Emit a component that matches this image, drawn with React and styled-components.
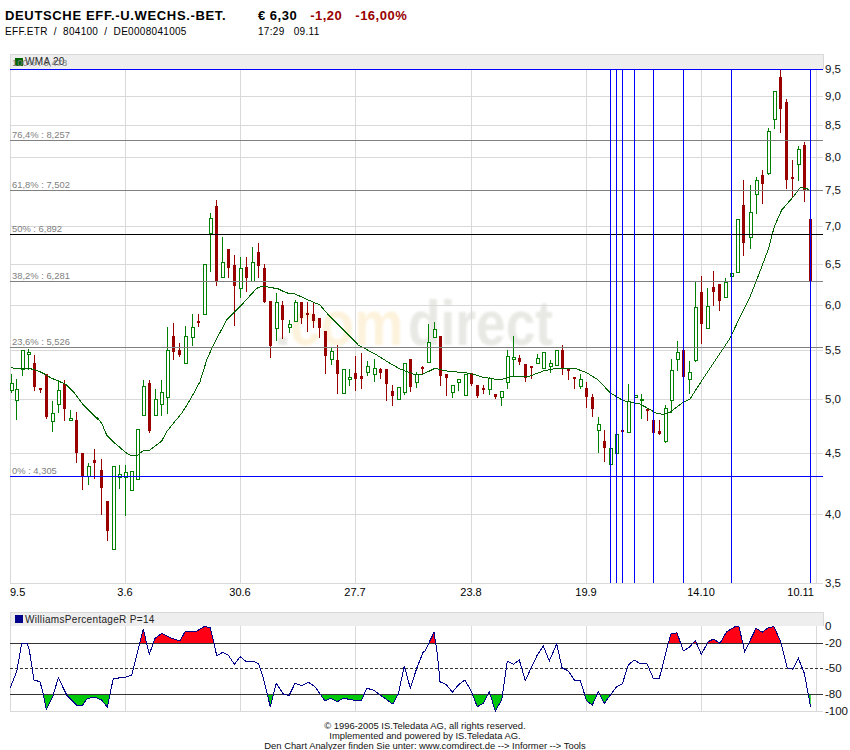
import React from "react";
import styled, { createGlobalStyle } from "styled-components";

const GlobalStyle = createGlobalStyle`
  html, body {
    margin: 0;
    background: #fff;
  }
  body {
    font-family: "Liberation Sans", Arial, sans-serif;
    color: #000;
  }
`;

const Page = styled.div`
  width: 850px;
  height: 750px;
  overflow: hidden;
`;

const Header = styled.header`
  display: grid;
  grid-template-columns: 253px 1fr;
  height: 54px;
  padding: 8px 0 0 5px;
  box-sizing: border-box;
`;

const Title = styled.div`
  font-size: 13px;
  line-height: 15px;
  font-weight: bold;
  letter-spacing: 0.65px;
  white-space: pre;
`;

const Quote = styled.div`
  display: flex;
  gap: 13px;
`;

const QuoteValue = styled.span`
  font-size: 13px;
  line-height: 15px;
  font-weight: bold;
  letter-spacing: 0.5px;
  color: ${(p) => (p.$down ? "#990000" : "#000")};
`;

const Sub = styled.div`
  font-size: 10px;
  line-height: 12px;
  margin-top: 3px;
  letter-spacing: 0.3px;
  white-space: pre;
`;

const Panel = styled.section`
  margin-left: 10px;
  margin-top: ${(p) => p.$top || 0}px;
`;

const LegendBar = styled.div`
  position: relative;
  display: flex;
  align-items: center;
  gap: 2px;
  box-sizing: border-box;
  width: 814px;
  height: ${(p) => p.$height}px;
  padding-left: 4px;
  background: #eeeeee;
  border: solid #d9d9d9;
  border-width: 1px 1px 0 1px;
`;

const Swatch = styled.span`
  width: 8px;
  height: 8px;
  margin-top: -1px;
  background: ${(p) => p.$color};
`;

const LegendText = styled.span`
  font-size: 10px;
  line-height: 12px;
  letter-spacing: 0.32px;
  color: #222;
`;

const OverlapLabel = styled.span`
  position: absolute;
  left: 1px;
  top: 1px;
  font-size: 9.4px;
  line-height: 13px;
  color: #808080;
`;

const Chart = styled.svg`
  display: block;
  overflow: visible;
  font-family: "Liberation Sans", Arial, sans-serif;
`;

const Footer = styled.footer`
  margin-top: 8px;
  text-align: center;
  font-size: 9.4px;
  line-height: 10px;
  color: #111;
`;

const RED = "#990000";
const GREEN = "#008000";

// x, r/g, high, body top, body bottom, low (page pixels)
const candles = [
  [11,"g",374,383,390,392],[16,"g",379,389,400,419],[22,"g",350,350,369,375],[28,"g",349,352,354,369],
  [34,"r",355,363,387,390],[40,"r",388,388,390,392],[46,"r",374,374,417,418],[52,"g",401,413,421,431],
  [58,"g",380,390,404,412],[64,"r",380,384,409,420],[70,"g",410,418,420,420],[76,"r",412,420,453,462],
  [82,"r",453,453,476,489],[88,"g",463,466,476,484],[94,"r",449,460,463,478],[101,"r",459,470,488,514],
  [107,"r",501,501,531,540],[113,"g",466,466,549,549],[119,"g",465,474,477,488],[125,"g",465,472,477,515],
  [131,"g",471,471,490,490],[137,"g",429,429,479,479],[143,"g",380,386,415,415],[149,"r",380,383,431,432],
  [155,"g",389,399,415,415],[161,"g",380,392,404,415],[167,"g",327,350,397,413],[173,"r",323,336,352,359],
  [179,"r",343,350,355,356],[185,"g",326,336,363,363],[192,"g",314,327,337,345],[198,"r",314,321,322,326],
  [204,"g",264,264,314,314],[210,"g",213,218,233,271],[216,"r",200,206,281,285],[222,"g",237,262,277,277],
  [228,"r",249,249,268,277],[234,"r",255,265,286,325],[240,"g",257,268,288,297],[246,"r",257,267,278,291],
  [252,"g",247,262,281,281],[258,"r",243,252,266,277],[264,"r",264,268,302,302],[270,"r",301,301,346,357],
  [276,"g",293,302,328,340],[282,"r",301,305,320,338],[289,"g",320,324,327,332],[295,"g",300,302,321,321],
  [301,"r",302,302,318,323],[307,"r",302,313,315,331],[313,"r",303,314,321,327],[319,"r",318,318,328,337],
  [325,"r",331,331,356,373],[331,"g",347,351,359,364],[337,"r",345,360,374,393],[343,"g",369,369,393,393],
  [349,"g",369,377,379,385],[355,"r",356,373,379,390],[361,"r",353,376,379,388],[367,"g",361,366,372,375],
  [374,"g",359,368,374,381],[380,"r",368,369,373,378],[386,"r",369,369,384,400],[392,"r",385,391,396,405],
  [398,"g",387,387,399,399],[404,"g",363,363,392,394],[410,"r",359,359,387,391],[416,"g",372,374,382,387],
  [422,"r",366,367,369,374],[428,"g",324,342,362,362],[434,"g",322,329,337,337],[440,"r",336,336,376,385],
  [446,"r",374,374,378,395],[452,"g",385,385,392,397],[458,"g",379,379,382,390],[465,"g",374,374,395,395],
  [471,"r",373,373,384,385],[477,"r",385,385,396,397],[483,"r",385,388,390,393],[489,"g",377,378,389,394],
  [495,"r",394,394,397,398],[501,"g",391,391,397,405],[507,"g",350,356,382,388],[513,"g",336,357,359,376],
  [519,"r",355,358,362,364],[525,"r",364,364,378,381],[531,"r",366,366,367,378],[537,"g",354,358,363,363],
  [543,"g",352,352,368,368],[550,"g",360,363,366,372],[556,"g",350,350,365,365],[562,"r",345,350,368,374],
  [568,"r",368,368,371,379],[574,"r",377,377,379,388],[580,"g",374,379,386,388],[586,"r",382,388,397,407],
  [592,"r",394,397,409,416],[598,"g",417,424,430,452],[604,"r",430,441,448,461],[610,"g",448,448,464,464],
  [616,"g",434,434,453,453],[622,"r",430,430,432,432],[628,"g",384,401,432,432],[635,"g",395,395,397,397],
  [641,"g",394,399,400,418],[647,"r",409,409,411,420],[653,"r",420,420,433,433],[659,"r",420,431,434,434],
  [665,"g",405,408,441,442],[671,"g",359,370,400,412],[677,"g",341,352,359,370],[683,"r",350,350,377,377],
  [689,"g",361,372,379,393],[695,"g",282,307,360,361],[701,"r",276,292,324,343],[707,"g",288,306,328,328],
  [713,"r",271,287,292,305],[719,"r",284,284,301,310],[725,"g",278,282,297,297],[731,"g",273,273,276,276],
  [737,"g",219,219,272,272],[743,"r",180,205,243,255],[750,"g",185,212,237,248],[756,"g",177,180,194,213],
  [762,"r",170,175,184,203],[768,"g",128,131,173,174],[774,"g",91,91,119,128],[780,"r",69,77,109,132],
  [786,"r",99,102,180,188],[792,"r",160,177,179,196],[798,"g",146,149,164,180],[804,"r",142,145,190,201],
  [810,"r",219,219,282,282],
];

const z = (ox, oy, pts) => pts.map(([x, y]) => [ox + x / 3, oy + y / 3]);

const wmaLine = [
  ...z(0, 250, [[32,352],[48,356],[85,354],[120,365],[135,373],[155,385],[180,395],[200,405],[220,425],[250,465],[295,510]]),
  ...z(0, 400, [[290,50],[305,70],[320,105],[345,130],[380,160],[395,167],[413,165],[430,152],[450,150],[485,123],[500,95],[520,70],[545,40]]),
  ...z(0, 250, [[570,450],[600,395],[620,330],[640,285],[680,210],[720,170],[770,115],[790,108],[840,118]]),
  ...z(280, 290, [[0,0],[25,10],[45,12],[80,28],[120,45],[150,80],[200,130],[235,165],[290,195],[330,220],[360,237],[400,252],[430,252],[465,235],[500,243],[570,250],[610,262],[660,270],[700,258],[750,258],[790,243],[830,235],[850,237]]),
  ...z(560, 280, [[0,265],[50,267],[80,278],[115,300],[150,338],[190,362],[240,372],[290,400],[310,403],[330,397],[365,370],[390,357],[430,295],[470,235],[510,175],[545,100],[570,50],[590,0]]),
  ...z(425, 0, [[1030,748],[1048,680],[1070,630],[1105,590],[1125,563],[1145,565],[1152,570]]),
];

const williamsLine = [
  ...z(0, 570, [[30,355],[50,305],[65,220],[82,220],[88,240],[102,330],[120,335],[128,365],[139,418],[158,380],[175,323],[200,375],[230,405],[248,405],[262,385],[285,382],[305,390],[322,412],[340,325],[372,323],[395,315],[418,225],[430,178],[448,253],[465,205],[486,190],[510,203],[540,213],[555,185],[590,183],[612,170],[630,172],[642,220],[650,257],[668,247],[685,255],[703,283],[720,260],[738,274],[762,274],[776,282],[790,325],[811,410],[829,340],[850,372],[867,377],[885,340],[905,347],[925,337],[945,350],[975,393],[992,385],[1012,395],[1030,385],[1060,390],[1085,390],[1100,355],[1120,360],[1178,402],[1195,372],[1213,288],[1231,355],[1250,295],[1270,245]]),
  ...z(425, 570, [[0,243],[27,187],[37,250],[45,335],[65,345],[82,367],[100,345],[120,330],[140,367],[157,410],[175,400],[193,365],[211,423],[230,390],[247,273],[265,283],[283,270],[301,332],[320,290],[337,255],[355,228],[373,273],[395,222],[411,293],[430,303],[448,330],[466,332],[485,393],[502,405],[520,365],[538,400],[575,350],[592,342],[610,285],[628,270],[647,282],[665,279],[685,325],[703,325],[730,220],[738,192],[756,188],[775,243],[793,232],[811,212],[829,253],[850,215],[865,207],[885,220],[905,185],[930,170],[942,170],[959,245],[993,175],[1012,187],[1030,173],[1047,170],[1067,215],[1087,293],[1103,298],[1120,265],[1138,310],[1157,412]]),
];

const toPoints = (pts) => pts.map(([x, y]) => `${x.toFixed(1)},${y.toFixed(1)}`).join(" ");

const priceTicks = [
  ["9,5", 69], ["9,0", 96], ["8,5", 125], ["8,0", 157], ["7,5", 190], ["7,0", 226], ["6,5", 264],
  ["6,0", 305], ["5,5", 350], ["5,0", 399], ["4,5", 453], ["4,0", 514], ["3,5", 583],
];
const gridX = [10, 125, 240, 355, 471, 586, 701, 816];
const fibs = [
  ["76,4% : 8,257", 140, "#808080"], ["61,8% : 7,502", 190, "#808080"], ["50% : 6,892", 234, "#000"],
  ["38,2% : 6,281", 281, "#808080"], ["23,6% : 5,526", 347, "#808080"], ["0% : 4,305", 476, "#0000ff"],
];
const marks = [610, 616, 622, 634, 653, 683, 731, 810];
const dates = [["9.5", 10, "start"], ["3.6", 125, "middle"], ["30.6", 240, "middle"], ["27.7", 355, "middle"],
  ["23.8", 471, "middle"], ["19.9", 586, "middle"], ["14.10", 701, "middle"], ["10.11", 814, "end"]];
const percentTicks = [["0", 626], ["-20", 643], ["-50", 668], ["-80", 694], ["-100", 711]];

const HLine = ({ y, from = 10, to = 823, color, dash }) => (
  <line x1={from} x2={to} y1={y + 0.5} y2={y + 0.5} stroke={color} strokeDasharray={dash} shapeRendering="crispEdges" />
);

const VLine = ({ x, from, to, color }) => (
  <line x1={x + 0.5} x2={x + 0.5} y1={from} y2={to} stroke={color} shapeRendering="crispEdges" />
);

const Candle = ({ d: [x, kind, high, top, bottom, low] }) => {
  const color = kind === "g" ? GREEN : RED;
  return (
    <g shapeRendering="crispEdges">
      <line x1={x + 0.5} x2={x + 0.5} y1={high} y2={low + 1} stroke={color} />
      {kind === "g" ? (
        <rect x={x - 0.5} y={top + 0.5} width={3} height={Math.max(bottom - top, 1)} fill="#fff" stroke={color} />
      ) : (
        <rect x={x - 1} y={top} width={3} height={Math.max(bottom - top, 2)} fill={color} />
      )}
    </g>
  );
};

const Watermark = () => (
  <g fontWeight="bold" fontSize="63" filter="url(#soft)">
    <rect x={278} y={337} width={9} height={8} fill="#e8e8e4" />
    <text x={290} y={345} textLength={113} lengthAdjust="spacingAndGlyphs" fill="#fdf3dc">com</text>
    <text x={408} y={345} textLength={145} lengthAdjust="spacingAndGlyphs" fill="#e8e9e4">direct</text>
  </g>
);

const PriceChart = () => (
  <Chart width={840} height={530} viewBox="10 69 840 530">
    <defs>
      <filter id="soft"><feGaussianBlur stdDeviation="0.8" /></filter>
    </defs>
    <Watermark />
    {priceTicks.map(([t, y]) => <HLine key={t} y={y} color="#d9d9d9" />)}
    {gridX.map((x) => <VLine key={x} x={x} from={69} to={584} color="#d9d9d9" />)}
    {candles.map((d) => <Candle key={d[0]} d={d} />)}
    <polyline points={toPoints(wmaLine)} fill="none" stroke="#006400" strokeWidth="1" shapeRendering="crispEdges" />
    <HLine y={69} color="#0000ff" />
    {fibs.map(([label, y, color]) => (
      <g key={label}>
        <HLine y={y} color={color} />
        <text x={12} y={y - 2} fontSize="9.4" fill="#808080">{label}</text>
      </g>
    ))}
    {marks.map((x) => <VLine key={x} x={x} from={68} to={583} color="#0000ff" />)}
    {priceTicks.map(([t, y]) => (
      <text key={t} x={825} y={y + 4} fontSize="11.5" fill="#111">{t}</text>
    ))}
    {dates.map(([t, x, anchor]) => (
      <text key={t} x={x} y={596} fontSize="11" textAnchor={anchor} fill="#000">{t}</text>
    ))}
  </Chart>
);

const baseFill = (base) => {
  const first = williamsLine[0][0];
  const last = williamsLine[williamsLine.length - 1][0];
  return toPoints([[first, base], ...williamsLine, [last, base]]);
};

const IndicatorChart = () => (
  <Chart width={840} height={87} viewBox="10 626 840 87">
    <defs>
      <clipPath id="over"><rect x={0} y={620} width={850} height={23.5} /></clipPath>
      <clipPath id="under"><rect x={0} y={694.5} width={850} height={30} /></clipPath>
    </defs>
    {gridX.map((x) => <VLine key={x} x={x} from={626} to={712} color="#d9d9d9" />)}
    <HLine y={711} color="#d9d9d9" />
    <polygon points={baseFill(643.5)} fill="#ff0014" clipPath="url(#over)" />
    <polygon points={baseFill(694.5)} fill="#00c80a" clipPath="url(#under)" />
    <HLine y={643} color="#333" />
    <HLine y={668} color="#333" dash="3 2" />
    <HLine y={694} color="#333" />
    <polyline points={toPoints(williamsLine)} fill="none" stroke="#00008b" strokeWidth="1" shapeRendering="crispEdges" />
    {percentTicks.map(([t, y]) => (
      <text key={t} x={825} y={y + 4} fontSize="11.5" fill="#111">{t}</text>
    ))}
  </Chart>
);

const App = () => (
  <Page>
    <GlobalStyle />
    <Header>
      <div>
        <Title>DEUTSCHE EFF.-U.WECHS.-BET.</Title>
        <Sub>EFF.ETR  /  804100  /  DE0008041005</Sub>
      </div>
      <div>
        <Quote>
          <QuoteValue>€ 6,30</QuoteValue>
          <QuoteValue $down>-1,20</QuoteValue>
          <QuoteValue $down>-16,00%</QuoteValue>
        </Quote>
        <Sub>17:29   09.11</Sub>
      </div>
    </Header>
    <Panel>
      <LegendBar $height={15}>
        <Swatch $color="#006400" />
        <LegendText>WMA 20</LegendText>
        <OverlapLabel>100% : 9,478</OverlapLabel>
      </LegendBar>
      <PriceChart />
    </Panel>
    <Panel $top={13}>
      <LegendBar $height={14}>
        <Swatch $color="#00008b" />
        <LegendText>WilliamsPercentageR P=14</LegendText>
      </LegendBar>
      <IndicatorChart />
    </Panel>
    <Footer>
      <div>© 1996-2005 IS.Teledata AG, all rights reserved.</div>
      <div>Implemented and powered by IS.Teledata AG.</div>
      <div>Den Chart Analyzer finden Sie unter: www.comdirect.de --&gt; Informer --&gt; Tools</div>
    </Footer>
  </Page>
);

export default App;
